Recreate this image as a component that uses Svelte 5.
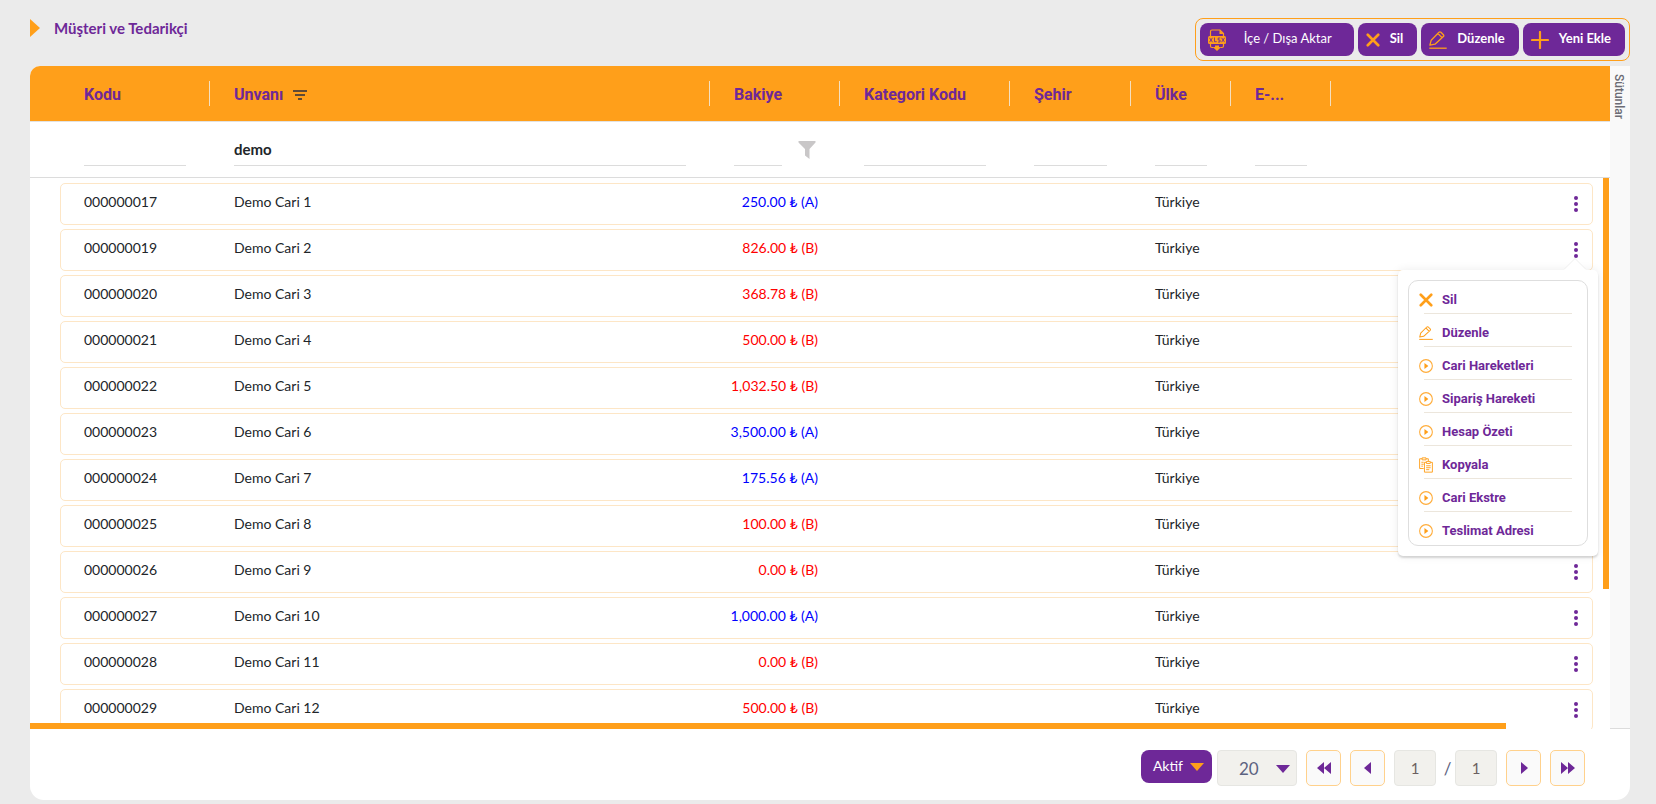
<script>
  const columns = [
    { key: 'kodu', label: 'Kodu' },
    { key: 'unvani', label: 'Unvanı', sorted: true },
    { key: 'bakiye', label: 'Bakiye', funnel: true },
    { key: 'kategori', label: 'Kategori Kodu' },
    { key: 'sehir', label: 'Şehir' },
    { key: 'ulke', label: 'Ülke' },
    { key: 'eposta', label: 'E-...' }
  ];

  let filters = $state({ kodu: '', unvani: 'demo', bakiye: '', kategori: '', sehir: '', ulke: '', eposta: '' });

  const amounts = [
    '250.00 ₺ (A)', '826.00 ₺ (B)', '368.78 ₺ (B)', '500.00 ₺ (B)', '1,032.50 ₺ (B)', '3,500.00 ₺ (A)',
    '175.56 ₺ (A)', '100.00 ₺ (B)', '0.00 ₺ (B)', '1,000.00 ₺ (A)', '0.00 ₺ (B)', '500.00 ₺ (B)'
  ];
  const codes = [17, 19, 20, 21, 22, 23, 24, 25, 26, 27, 28, 29];
  const rows = codes.map((code, i) => ({
    code: String(code).padStart(9, '0'),
    name: `Demo Cari ${i + 1}`,
    amount: amounts[i],
    credit: amounts[i].endsWith('(A)'),
    country: 'Türkiye'
  }));

  const actions = [
    { label: 'Sil', icon: 'cross' },
    { label: 'Düzenle', icon: 'pen' },
    { label: 'Cari Hareketleri', icon: 'play' },
    { label: 'Sipariş Hareketi', icon: 'play' },
    { label: 'Hesap Özeti', icon: 'play' },
    { label: 'Kopyala', icon: 'copy' },
    { label: 'Cari Ekstre', icon: 'play' },
    { label: 'Teslimat Adresi', icon: 'play' }
  ];

  let openRow = $state(1);
  let pageSize = $state('20');
  let page = $state('1');
  let pageCount = $state('1');
</script>

{#snippet icon(name)}
  {#if name === 'cross'}
    <svg class="icon cross" viewBox="0 0 16 16" aria-hidden="true">
      <path d="M2 2l12 12M14 2L2 14" fill="none" stroke="currentColor" stroke-width="3" stroke-linecap="round" />
    </svg>
  {:else if name === 'plus'}
    <svg class="icon" viewBox="0 0 18 18" aria-hidden="true">
      <path d="M9 1v16M1 9h16" fill="none" stroke="currentColor" stroke-width="2.2" stroke-linecap="round" />
    </svg>
  {:else if name === 'pen'}
    <svg class="icon" viewBox="0 0 18 18" aria-hidden="true">
      <path d="M.9 14.200l1.300-5L10 1.300q.9-.8 1.900 0l2.500 2.500q.8.9 0 1.800L6 13.200zM9 2.600l4.200 4.200" fill="none" stroke="currentColor" stroke-width="1.300" stroke-linejoin="round" />
      <path d="M.3 17.200h17.400" stroke="currentColor" stroke-width="1.300" />
    </svg>
  {:else if name === 'play'}
    <svg class="icon" viewBox="0 0 18 18" aria-hidden="true">
      <circle cx="9" cy="9" r="8.200" fill="none" stroke="currentColor" stroke-width="1.400" opacity=".85" />
      <path d="M7 5.200L12 9l-5 3.800z" fill="currentColor" />
    </svg>
  {:else if name === 'copy'}
    <svg class="icon" viewBox="0 0 18 20" aria-hidden="true">
      <g fill="none" stroke="currentColor" stroke-width="1.200">
        <path d="M6 14.500H.8V2H4M9 2h3v3" />
        <path d="M4 .8h5v2.600H4zM3 6.500h3M3 9h3M3 11.500h2" />
        <path d="M7 6.600h2.500M14.500 6.600h2.700v12.600H7V6.600M9.500 5.400h5V8h-5zM9.200 11h5.800M9.200 13.500h5.800M9.200 16h4" />
      </g>
    </svg>
  {:else if name === 'xlsx'}
    <svg class="icon" viewBox="0 0 18 22" aria-hidden="true">
      <path d="M2.500 7V2.500Q2.500 1 4 1H12l3.500 3.500V7M2.500 15v2Q2.500 18.500 4 18.500h1.500M15.500 15v2q0 1.500-1.500 1.500h-1.500" fill="none" stroke="currentColor" stroke-width="1.200" />
      <path d="M11.500 1v4h4z" fill="currentColor" />
      <rect x="0" y="7" width="18" height="8" rx="1.500" fill="currentColor" />
      <path d="M1.500 8.800l3 4.400M4.500 8.800l-3 4.400M6.500 8.500v4.200h2.200M12.200 9h-2v2h1.800v2h-2M13.600 8.800l3 4.400M16.600 8.800l-3 4.400" fill="none" stroke="#6e2898" stroke-width=".9" />
      <path d="M7 16.400h4v1.700h2.200L9 22l-4.200-3.900H7z" fill="currentColor" />
    </svg>
  {/if}
{/snippet}

<main class="page">
  <header class="topbar">
    <h1>Müşteri ve Tedarikçi</h1>
    <div class="toolbar">
      <button class="tool export" type="button">{@render icon('xlsx')}<span>İçe / Dışa Aktar</span></button>
      <button class="tool" type="button">{@render icon('cross')}<span>Sil</span></button>
      <button class="tool" type="button">{@render icon('pen')}<span>Düzenle</span></button>
      <button class="tool" type="button">{@render icon('plus')}<span>Yeni Ekle</span></button>
    </div>
  </header>

  <section class="card">
    <div class="gridarea">
      <table>
        <thead>
          <tr class="heads">
            {#each columns as col}
              <th scope="col">
                {col.label}
                {#if col.sorted}
                  <svg class="sort" viewBox="0 0 14 10" aria-hidden="true">
                    <path d="M0 1h14M2 5h10M5 9h4" stroke="currentColor" stroke-width="2" />
                  </svg>
                {/if}
              </th>
            {/each}
          </tr>
          <tr class="filters">
            {#each columns as col}
              <td>
                <input type="text" aria-label={col.label} bind:value={filters[col.key]} />
                {#if col.funnel}
                  <button class="funnel" type="button" aria-label="Filtre">
                    <svg viewBox="0 0 18 18" aria-hidden="true">
                      <path d="M.5 0h17v1.500L11.500 8v10L7 14.500V8L.5 1.500z" fill="currentColor" />
                    </svg>
                  </button>
                {/if}
              </td>
            {/each}
            <td></td>
          </tr>
        </thead>
        <tbody>
          {#each rows as row, i}
            <tr>
              <td>{row.code}</td>
              <td>{row.name}</td>
              <td class="amount" class:credit={row.credit}>{row.amount}</td>
              <td></td>
              <td></td>
              <td>{row.country}</td>
              <td></td>
              <td class="actions">
                <button class="dots" type="button" aria-label="İşlemler" aria-expanded={openRow === i} onclick={() => (openRow = openRow === i ? -1 : i)}>
                  <svg viewBox="0 0 4 16" aria-hidden="true">
                    <circle cx="2" cy="2" r="2" /><circle cx="2" cy="8" r="2" /><circle cx="2" cy="14" r="2" />
                  </svg>
                </button>
                {#if openRow === i}
                  <div class="menu">
                    <ul>
                      {#each actions as action}
                        <li><button type="button">{@render icon(action.icon)}<span>{action.label}</span></button></li>
                      {/each}
                    </ul>
                  </div>
                {/if}
              </td>
            </tr>
          {/each}
        </tbody>
      </table>
      <div class="vbar"></div>
      <div class="hbar"></div>
      <aside><button type="button">Sütunlar</button></aside>
    </div>

    <footer>
      <button class="status" type="button">Aktif
        <svg viewBox="0 0 14 8" aria-hidden="true"><path d="M0 0h14L7 8z" fill="#ff9f1a" /></svg>
      </button>
      <div class="size">
        <select aria-label="Sayfa boyutu" bind:value={pageSize}>
          <option>20</option>
          <option>50</option>
          <option>100</option>
        </select>
        <svg viewBox="0 0 14 8" aria-hidden="true"><path d="M0 0h14L7 8z" fill="#6e2898" /></svg>
      </div>
      <button class="nav" type="button" aria-label="İlk sayfa">
        <svg viewBox="0 0 14 12" aria-hidden="true"><path d="M7 0v12L0 6zM14 0v12L7 6z" /></svg>
      </button>
      <button class="nav" type="button" aria-label="Önceki sayfa">
        <svg viewBox="0 0 14 12" aria-hidden="true"><path d="M10 0v12L3 6z" /></svg>
      </button>
      <div class="pages">
        <input type="text" aria-label="Sayfa" bind:value={page} />
        <span>/</span>
        <input type="text" aria-label="Toplam sayfa" bind:value={pageCount} />
      </div>
      <button class="nav" type="button" aria-label="Sonraki sayfa">
        <svg viewBox="0 0 14 12" aria-hidden="true"><path d="M4 0v12l7-6z" /></svg>
      </button>
      <button class="nav" type="button" aria-label="Son sayfa">
        <svg viewBox="0 0 14 12" aria-hidden="true"><path d="M0 0v12l7-6zM7 0v12l7-6z" /></svg>
      </button>
    </footer>
  </section>
</main>

<style>
  :global(body) {
    margin: 0;
    background: #ebebeb;
  }
  .page,
  .page * {
    box-sizing: border-box;
  }
  .page {
    height: 100vh;
    min-height: 480px;
    padding: 18px 26px 4px 30px;
    display: flex;
    flex-direction: column;
    gap: 5px;
    font-family: Lato, Roboto, sans-serif;
    font-size: 14px;
    color: #212529;
  }
  button,
  input,
  select {
    font: inherit;
    margin: 0;
    padding: 0;
    border: 0;
    background: none;
    color: inherit;
  }
  button {
    cursor: pointer;
  }
  svg {
    display: block;
    flex: none;
  }
  .icon {
    width: 18px;
    height: 18px;
    color: #ff9f1a;
  }

  .topbar {
    display: flex;
    justify-content: space-between;
    align-items: flex-start;
  }
  h1 {
    margin: 0;
    display: flex;
    align-items: center;
    gap: 14px;
    font-size: 15px;
    line-height: 20px;
    font-weight: 700;
    color: #6e2898;
  }
  h1::before {
    content: '';
    border: 9px solid transparent;
    border-left: 10px solid #ff9f1a;
    border-right: 0;
  }
  .toolbar {
    display: flex;
    gap: 4px;
    padding: 4px;
    border: 1px solid #ff9f1a;
    border-radius: 8px;
  }
  .tool {
    display: flex;
    align-items: center;
    gap: 10px;
    height: 33px;
    padding: 0 14px 0 8px;
    border-radius: 8px;
    background: #6e2898;
    color: #fff;
    font-size: 13px;
    font-weight: 700;
  }
  .tool span {
    padding-bottom: 3px;
  }
  .tool .cross {
    width: 14px;
    height: 14px;
  }
  .tool.export {
    gap: 18px;
    padding-right: 22px;
    font-weight: 400;
  }
  .tool.export .icon {
    height: 22px;
  }

  .card {
    flex: 1;
    min-height: 0;
    display: flex;
    flex-direction: column;
    background: #fff;
    border-radius: 10px 0 14px 14px;
  }
  .gridarea {
    position: relative;
    flex: 1;
    min-height: 0;
    display: flex;
  }
  table {
    flex: 1;
    min-width: 0;
    display: flex;
    flex-direction: column;
  }
  thead {
    display: block;
  }
  tr {
    display: grid;
    grid-template-columns: 150px 500px 130px 170px 121px 100px 100px 1fr;
  }
  th,
  td {
    display: flex;
    align-items: center;
    min-width: 0;
    padding: 0 24px;
  }
  .heads {
    height: 56px;
    padding-left: 30px;
    align-items: center;
    background: #ff9f1a;
    border-bottom: 1px solid #e2e2e2;
    border-radius: 10px 0 0 0;
  }
  th {
    height: 25px;
    gap: 10px;
    padding-top: 2px;
    border-right: 1px solid #f4dfc0;
    font-family: Roboto, sans-serif;
    font-size: 16px;
    font-weight: 700;
    white-space: nowrap;
    color: #6e2898;
  }
  .sort {
    width: 14px;
    height: 10px;
    color: #5f4a35;
  }
  .filters {
    height: 56px;
    padding-left: 30px;
    border-bottom: 1px solid #dcdcdc;
  }
  .filters td {
    gap: 16px;
  }
  .filters input {
    width: 100%;
    min-width: 0;
    height: 33px;
    border-bottom: 1px solid #dcdcdc;
    border-radius: 0;
    outline: none;
    font-weight: 700;
    font-size: 15px;
  }
  .funnel {
    color: #c9c7c8;
  }
  .funnel svg {
    width: 18px;
    height: 18px;
  }
  tbody {
    flex: 1;
    min-height: 0;
    display: flex;
    flex-direction: column;
    gap: 4px;
    padding: 5px 17px 0 30px;
    overflow: hidden;
  }
  tbody tr {
    flex: none;
    height: 42px;
    border: 1px solid #fde6c6;
    border-radius: 5px;
  }
  tbody td {
    padding: 0 23px 6px;
    white-space: nowrap;
  }
  tbody .amount {
    justify-content: flex-end;
    color: #f00;
  }
  tbody .amount.credit {
    color: #00f;
  }
  tbody .actions {
    position: relative;
    justify-content: flex-end;
    padding: 0 14px 0 0;
  }
  .dots {
    display: flex;
  }
  .dots svg {
    width: 4px;
    height: 16px;
    fill: #6e2898;
  }

  .menu {
    position: absolute;
    z-index: 2;
    top: 40px;
    right: -6px;
    width: 200px;
    padding: 10px;
    background: #fff;
    border-radius: 5px;
    box-shadow: 0 2px 2px rgba(0, 0, 0, 0.14), 0 0 10px rgba(0, 0, 0, 0.08);
  }
  .menu::before {
    content: '';
    position: absolute;
    top: -11px;
    right: 12px;
    border: 11px solid transparent;
    border-bottom-color: #fff;
    border-top: 0;
    filter: drop-shadow(0 -1px 0 #eee);
  }
  ul {
    margin: 0;
    padding: 0 15px 0 10px;
    list-style: none;
    border: 1px solid #dedede;
    border-radius: 10px;
  }
  li {
    position: relative;
    height: 33px;
  }
  li + li::before {
    content: '';
    position: absolute;
    top: -1px;
    left: 5px;
    right: 0;
    height: 1px;
    background: #ece6dc;
  }
  li button {
    display: flex;
    align-items: center;
    gap: 9px;
    width: 100%;
    height: 38px;
    font-family: Roboto, sans-serif;
    font-size: 13px;
    font-weight: 700;
    color: #6e2898;
  }
  li span {
    padding-bottom: 2px;
  }
  li .icon {
    width: 14px;
    height: 16px;
  }

  .vbar {
    position: absolute;
    top: 112px;
    right: 21px;
    bottom: 140px;
    width: 6px;
    background: #ff9f1a;
  }
  .hbar {
    position: absolute;
    left: 0;
    right: 124px;
    bottom: 0;
    height: 6px;
    background: #ff9f1a;
  }
  aside {
    width: 20px;
    background: #f9f9f9;
    border-bottom: 1px solid #dcdcdc;
  }
  aside button {
    padding: 8px 1px;
    writing-mode: vertical-rl;
    font-family: Roboto, sans-serif;
    font-size: 12px;
    line-height: 16px;
    font-weight: 500;
    color: #6c6c74;
  }

  footer {
    display: flex;
    justify-content: flex-end;
    align-items: flex-start;
    gap: 9px;
    height: 71px;
    padding: 21px 45px 0 30px;
    font-size: 17px;
    color: #5c6280;
  }
  .status {
    display: flex;
    align-items: center;
    gap: 7px;
    height: 33px;
    padding: 0 8px 3px 12px;
    border-radius: 8px;
    background: #6e2898;
    color: #fff;
    font-size: 14px;
  }
  .status svg,
  .size svg {
    width: 14px;
    height: 8px;
  }
  .status svg {
    margin-top: 4px;
  }
  .size {
    position: relative;
    margin-left: -4px;
  }
  .size select {
    appearance: none;
    width: 80px;
    height: 36px;
    padding-left: 21px;
    border: 1px solid #e6e6e2;
    border-radius: 4px;
    background: #f2f1ed;
  }
  .size svg {
    position: absolute;
    top: 15px;
    right: 7px;
    pointer-events: none;
  }
  .nav {
    display: flex;
    align-items: center;
    justify-content: center;
    width: 35px;
    height: 36px;
    border: 1px solid #ffd18c;
    border-radius: 5px;
    background: #fafafa;
  }
  .nav svg {
    width: 14px;
    height: 12px;
    fill: #6e2898;
  }
  .pages {
    display: flex;
    align-items: center;
  }
  .pages input {
    width: 42px;
    height: 36px;
    border: 1px solid #e6e6e2;
    border-radius: 4px;
    background: #f2f1ed;
    text-align: center;
    font-size: 15px;
    color: #6b5f60;
  }
  .pages span {
    width: 19px;
    padding-left: 4px;
    text-align: center;
  }
</style>
